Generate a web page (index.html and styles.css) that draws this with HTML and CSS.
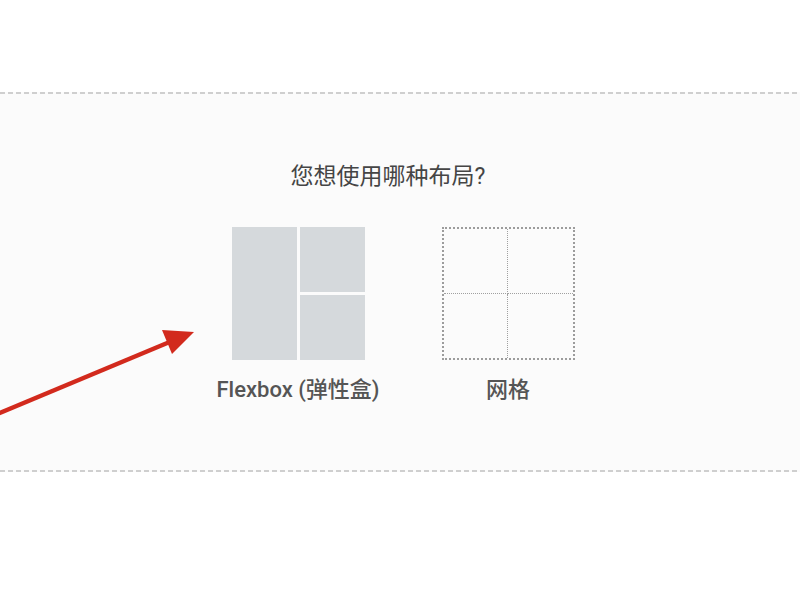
FILE: index.html
```html
<!DOCTYPE html>
<html lang="zh-CN">
  <head>
    <meta charset="UTF-8" />
    <meta name="viewport" content="width=device-width, initial-scale=1.0" />
    <title>选择布局</title>
    <link rel="stylesheet" href="styles.css">
  </head>
  <body>
    <div class="panel">
      <div class="question">您想使用哪种布局?</div>
      <div class="options">
        <div class="option">
          <div class="flex-preview">
            <div class="flex-tall"></div>
            <div class="flex-stack">
              <div class="flex-cell"></div>
              <div class="flex-cell"></div>
            </div>
          </div>
          <div class="label">Flexbox (弹性盒)</div>
        </div>
        <div class="option">
          <div class="grid-preview">
            <div class="grid-cell tl"></div>
            <div class="grid-cell tr"></div>
            <div class="grid-cell bl"></div>
            <div class="grid-cell br"></div>
          </div>
          <div class="label">网格</div>
        </div>
      </div>
    </div>

    <!-- pointer drawn on top -->
    <svg class="pointer" width="800" height="600" viewBox="0 0 800 600">
      <line x1="-10" y1="417" x2="172" y2="341" stroke="#d22a1d" stroke-width="4.5" />
      <polygon points="194,332 162,330 172,354" fill="#d22a1d" />
    </svg>
  </body>
</html>
```

FILE: styles.css
```css
body {
  margin: 0;
  background-color: #fff;
  font-family: Roboto, "Noto Sans CJK SC", sans-serif;
  color: #444;
}

.panel {
  margin-top: 92px;
  height: 380px;
  box-sizing: border-box;
  padding-top: 69px;
  background:
    repeating-linear-gradient(90deg, #cfcfcf 0 5px, transparent 5px 8px) top / 100% 2px no-repeat,
    repeating-linear-gradient(90deg, #cfcfcf 0 5px, transparent 5px 8px) bottom / 100% 2px no-repeat,
    #fbfbfb;
}

.question {
  text-align: center;
  font-size: 23px;
  line-height: 32px;
  padding-right: 24px;
  color: #454545;
}

.options {
  display: flex;
  justify-content: center;
  gap: 40px;
  margin-top: 34px;
  padding-left: 6px;
}

.option {
  width: 170px;
  display: flex;
  flex-direction: column;
  align-items: center;
}

.flex-preview {
  width: 133px;
  height: 133px;
  display: flex;
  gap: 3px;
}

.flex-tall {
  flex: 1;
  background-color: #d5d9dc;
}

.flex-stack {
  flex: 1;
  display: flex;
  flex-direction: column;
  gap: 3px;
}

.flex-cell {
  flex: 1;
  background-color: #d5d9dc;
}

.grid-preview {
  width: 133px;
  height: 133px;
  box-sizing: border-box;
  border: 2px dotted #9c9c9c;
  display: grid;
  grid-template-columns: 1fr 1fr;
  grid-template-rows: 1fr 1fr;
}

.grid-cell.tl {
  border-right: 1px dotted #a0a0a0;
  border-bottom: 1px dotted #a0a0a0;
}

.grid-cell.tr {
  border-bottom: 1px dotted #a0a0a0;
}

.grid-cell.bl {
  border-right: 1px dotted #a0a0a0;
}

.label {
  margin-top: 17px;
  font-size: 22px;
  line-height: 26px;
  font-weight: 500;
  color: #555;
  white-space: nowrap;
}

.pointer {
  position: absolute;
  top: 0;
  left: 0;
  pointer-events: none;
}
```
